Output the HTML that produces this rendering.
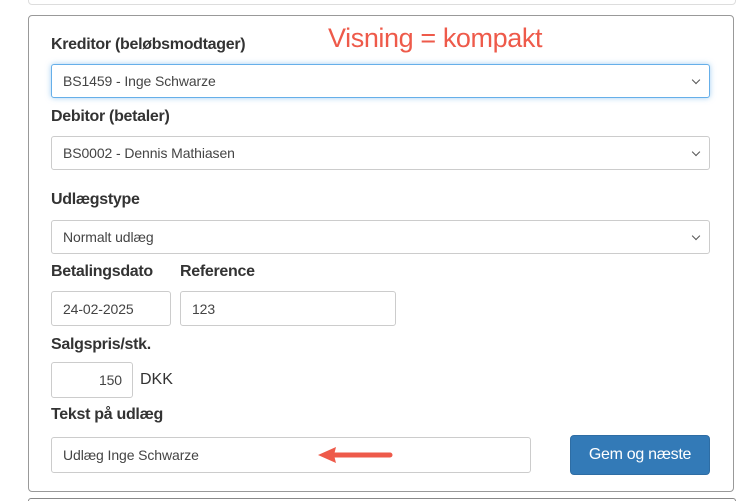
<!DOCTYPE html>
<html style="width:739px;height:502px;overflow:hidden"><head><meta charset="utf-8"><style>
html,body{overflow:hidden}
body{margin:0;width:739px;height:502px;background:#fff;position:relative;font-family:"Liberation Sans",sans-serif;color:#333}
.a{position:absolute}
.lbl{position:absolute;font-weight:bold;font-size:16px;color:#333;letter-spacing:-0.3px}
.in{position:absolute;border:1px solid #ccc;border-radius:3px;box-sizing:border-box;font-size:14px;color:#444;padding-left:11px;display:flex;align-items:center;background:#fff;letter-spacing:-0.1px}
.chev{position:absolute;right:10px;top:50%;margin-top:-4px;width:5px;height:5px;border-right:1px solid #555;border-bottom:1px solid #555;transform:rotate(45deg)}
</style></head><body>
<div class="a" style="left:28px;top:-10px;width:706px;height:13px;border:1px solid #ddd;border-radius:4px"></div>
<div class="a" style="left:28px;top:15px;width:706px;height:477px;border:1px solid #999;border-radius:4px;box-sizing:border-box"></div>
<div class="a" style="left:28px;top:498px;width:706px;height:2px;border:1px solid #888;border-bottom:none;border-radius:4px 4px 0 0"></div>
<div class="a" style="left:328px;top:23px;font-size:27px;color:#ee5a4a;letter-spacing:-0.4px">Visning = kompakt</div>
<div class="lbl" style="left:51px;top:36px">Kreditor (beløbsmodtager)</div>
<div class="in" style="left:51px;top:64px;width:659px;height:34px;border-color:#66afe9;box-shadow:0 0 6px rgba(102,175,233,.6)">BS1459 - Inge Schwarze<span class="chev"></span></div>
<div class="lbl" style="left:51px;top:108px">Debitor (betaler)</div>
<div class="in" style="left:51px;top:136px;width:659px;height:34px">BS0002 - Dennis Mathiasen<span class="chev"></span></div>
<div class="lbl" style="left:51px;top:191px">Udlægstype</div>
<div class="in" style="left:51px;top:220px;width:659px;height:34px">Normalt udlæg<span class="chev"></span></div>
<div class="lbl" style="left:51px;top:263px">Betalingsdato</div>
<div class="lbl" style="left:180px;top:263px">Reference</div>
<div class="in" style="left:51px;top:291px;width:120px;height:35px">24-02-2025</div>
<div class="in" style="left:180px;top:291px;width:216px;height:35px">123</div>
<div class="lbl" style="left:51px;top:336px">Salgspris/stk.</div>
<div class="in" style="left:51px;top:362px;width:82px;height:36px;justify-content:flex-end;padding-right:10px">150</div>
<div class="a" style="left:140px;top:371px;font-size:16px;color:#333">DKK</div>
<div class="lbl" style="left:51px;top:406px">Tekst på udlæg</div>
<div class="in" style="left:51px;top:437px;width:480px;height:36px">Udlæg Inge Schwarze</div>
<div class="a" style="left:570px;top:435px;width:140px;height:40px;background:#337ab7;border:1px solid #2e6da4;border-radius:4px;box-sizing:border-box;color:#fff;font-size:16px;display:flex;align-items:center;justify-content:center;letter-spacing:-0.3px">Gem og næste</div>
<svg class="a" style="left:310px;top:443px" width="85" height="24"><line x1="80" y1="12" x2="22" y2="12" stroke="#ee5a4a" stroke-width="5" stroke-linecap="round"/><polygon points="8,12 26,4 24,12 26,20" fill="#ee5a4a"/></svg>
</body></html>
